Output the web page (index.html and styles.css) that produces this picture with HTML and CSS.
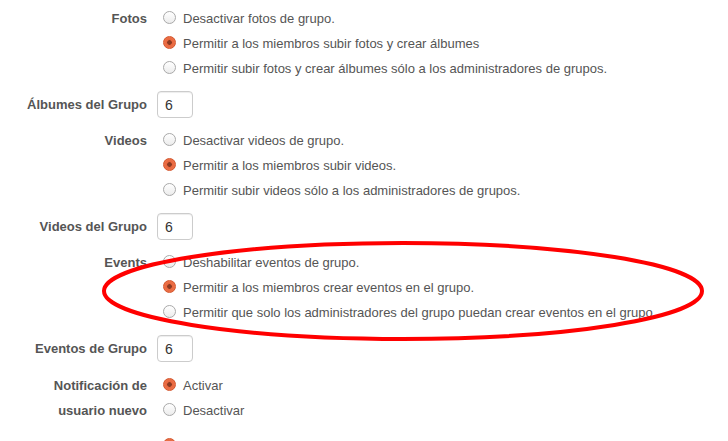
FILE: index.html
```html
<!doctype html>
<html lang="es">
<head>
	<meta charset="UTF-8">
	<title>Opciones del grupo</title>
	<link rel="stylesheet" href="styles.css">
</head>
<body>

	<form class="groupSettings">

		<div class="formRow">
			<div class="rowLabel">Fotos</div>
			<div class="rowOptions">
				<label class="option"><input type="radio" name="photos"> Desactivar fotos de grupo.</label>
				<label class="option"><input type="radio" name="photos" checked> Permitir a los miembros subir fotos y crear álbumes</label>
				<label class="option"><input type="radio" name="photos"> Permitir subir fotos y crear álbumes sólo a los administradores de grupos.</label>
			</div>
		</div>

		<div class="formRow">
			<div class="rowLabel numberLabel">Álbumes del Grupo</div>
			<div class="rowOptions"><input type="text" class="smallNumber" value="6"></div>
		</div>

		<div class="formRow">
			<div class="rowLabel">Videos</div>
			<div class="rowOptions">
				<label class="option"><input type="radio" name="videos"> Desactivar videos de grupo.</label>
				<label class="option"><input type="radio" name="videos" checked> Permitir a los miembros subir videos.</label>
				<label class="option"><input type="radio" name="videos"> Permitir subir videos sólo a los administradores de grupos.</label>
			</div>
		</div>

		<div class="formRow">
			<div class="rowLabel numberLabel">Videos del Grupo</div>
			<div class="rowOptions"><input type="text" class="smallNumber" value="6"></div>
		</div>

		<div class="formRow">
			<div class="rowLabel">Events</div>
			<div class="rowOptions">
				<label class="option"><input type="radio" name="events"> Deshabilitar eventos de grupo.</label>
				<label class="option"><input type="radio" name="events" checked> Permitir a los miembros crear eventos en el grupo.</label>
				<label class="option"><input type="radio" name="events"> Permitir que solo los administradores del grupo puedan crear eventos en el grupo</label>
			</div>
		</div>

		<div class="formRow">
			<div class="rowLabel numberLabel">Eventos de Grupo</div>
			<div class="rowOptions"><input type="text" class="smallNumber" value="6"></div>
		</div>

		<div class="formRow notifyRow">
			<div class="rowLabel">Notificación de<br>usuario nuevo</div>
			<div class="rowOptions">
				<label class="option"><input type="radio" name="notify" checked> Activar</label>
				<label class="option"><input type="radio" name="notify"> Desactivar</label>
			</div>
		</div>

		<div class="formRow">
			<div class="rowLabel">Foro del Grupo</div>
			<div class="rowOptions">
				<label class="option"><input type="radio" name="forum" checked> Activar</label>
				<label class="option"><input type="radio" name="forum"> Desactivar</label>
			</div>
		</div>

	</form>

	<!-- red marker drawn over the events block -->
	<svg class="highlight" width="728" height="441" viewBox="0 0 728 441">
		<ellipse cx="403" cy="291" rx="299" ry="48" fill="none" stroke="#f00" stroke-width="4"/>
	</svg>

</body>
</html>
```

FILE: styles.css
```css
html, body {
	margin: 0px;
	padding: 0px;
	background-color: #fff;
}
body {
	font-family: "Liberation Sans", Arial, sans-serif;
	font-size: 13px;
	color: #555;
	position: relative;
	height: 441px;
	overflow: hidden;
}

.groupSettings {
	padding-top: 6px;
}

.formRow {
	display: grid;
	grid-template-columns: 147px 1fr;
	column-gap: 10px;
	margin-bottom: 10px;
}
.notifyRow {
	padding-top: 1px;
	margin-bottom: 10px;
}

.rowLabel {
	font-weight: bold;
	text-align: right;
	line-height: 25px;
	white-space: nowrap;
}
.numberLabel {
	line-height: 27px;
}

.rowOptions {
	display: flex;
	flex-direction: column;
}

.option {
	display: flex;
	align-items: center;
	height: 25px;
	padding-left: 6px;
	white-space: nowrap;
}

/* custom radios, grey when off and orange when on */
.option input[type=radio] {
	appearance: none;
	-webkit-appearance: none;
	width: 13px;
	height: 13px;
	margin: 0 7px 0 0;
	border: 1px solid #a9a9a9;
	border-radius: 50%;
	background: linear-gradient(#fff, #ececec);
	position: relative;
	top: -1px;
	flex: none;
}
.option input[type=radio]:checked {
	border-color: #d4552c;
	background: radial-gradient(circle, #8b3a22 0 2px, #e8663d 2.6px, #ee7a52 100%);
}

.smallNumber {
	box-sizing: border-box;
	width: 36px;
	height: 27px;
	margin: 0;
	padding: 0 7px;
	border: 1px solid #ccc;
	border-radius: 4px;
	box-shadow: inset 0 1px 1px rgba(0, 0, 0, 0.075);
	font-family: "Liberation Sans", Arial, sans-serif;
	font-size: 14px;
	color: #333;
}

.highlight {
	position: absolute;
	left: 0px;
	top: 0px;
	pointer-events: none;
}
```
